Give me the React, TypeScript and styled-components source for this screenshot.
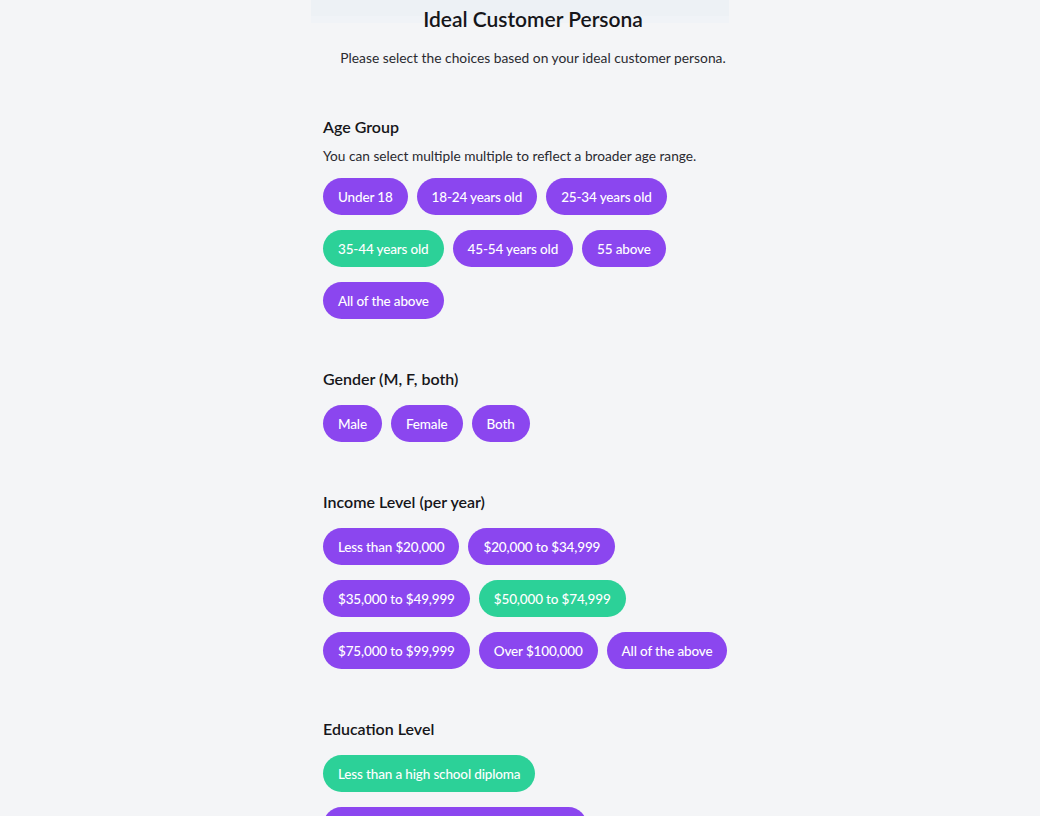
import React, { useState } from 'react';
import styled, { createGlobalStyle } from 'styled-components';

const GlobalStyle = createGlobalStyle`
    html, body {
        margin: 0;
        padding: 0;
        background: #f4f5f7;
        font-family: 'Lato', 'Liberation Sans', sans-serif;
        color: #1b1b1f;
    }
`;

interface Section {
    title: string;
    description?: string;
    options: string[];
    initial: string[];
}

const sections: Section[] = [
    {
        title: 'Age Group',
        description: 'You can select multiple multiple to reflect a broader age range.',
        options: [
            'Under 18',
            '18-24 years old',
            '25-34 years old',
            '35-44 years old',
            '45-54 years old',
            '55 above',
            'All of the above',
        ],
        initial: ['35-44 years old'],
    },
    {
        title: 'Gender (M, F, both)',
        options: ['Male', 'Female', 'Both'],
        initial: [],
    },
    {
        title: 'Income Level (per year)',
        options: [
            'Less than $20,000',
            '$20,000 to $34,999',
            '$35,000 to $49,999',
            '$50,000 to $74,999',
            '$75,000 to $99,999',
            'Over $100,000',
            'All of the above',
        ],
        initial: ['$50,000 to $74,999'],
    },
    {
        title: 'Education Level',
        options: [
            'Less than a high school diploma',
            'High school diploma or equivalent (GED)',
            'Some college, no degree',
            "Bachelor's degree",
        ],
        initial: ['Less than a high school diploma'],
    },
];

const Page = styled.div`
    width: 418px;
    margin: 0 auto;
    padding-bottom: 60px;
`;

const TopStrip = styled.div`
    height: 23px;
    margin-bottom: -23px;
    background: linear-gradient(#edf1f5 0 16px, #f0f3f7 16px 23px);
`;

const Content = styled.div`
    position: relative;
    width: 420px;
    margin-left: 12px;
    padding-top: 6px;
`;

const Header = styled.header`
    display: flex;
    flex-direction: column;
    align-items: center;
    gap: 17px;
`;

const Title = styled.h1`
    margin: 0;
    font-size: 21px;
    line-height: 25px;
    font-weight: 600;
    color: #16161a;
`;

const Subtitle = styled.p`
    margin: 0;
    font-size: 13.8px;
    line-height: 20px;
    color: #2a2a30;
`;

const Block = styled.section`
    margin-top: 47px;

    & + & {
        margin-top: 48px;
    }
`;

const Heading = styled.h2`
    margin: 0;
    font-size: 16px;
    line-height: 24px;
    font-weight: 600;
    color: #16161a;
`;

const Hint = styled.p`
    margin: 7px 0 0;
    font-size: 13.7px;
    line-height: 20px;
    color: #2a2a30;
`;

const Options = styled.div<{ $tight: boolean }>`
    display: flex;
    flex-wrap: wrap;
    column-gap: 9px;
    row-gap: 15px;
    margin-top: ${(p) => (p.$tight ? 12 : 14)}px;
`;

const Pill = styled.button<{ $active: boolean }>`
    height: 37px;
    padding: 0 15px;
    border: none;
    border-radius: 19px;
    background: ${(p) => (p.$active ? '#2cd198' : '#8b46ef')};
    color: #ffffff;
    font-family: inherit;
    font-size: 13.5px;
    font-weight: 500;
    letter-spacing: -0.15px;
    white-space: nowrap;
    cursor: pointer;
`;

const App = () => {
    const [selected, setSelected] = useState<Record<string, string[]>>(() =>
        Object.fromEntries(sections.map((s) => [s.title, s.initial]))
    );

    const toggle = (section: string, option: string) => {
        setSelected((prev) => {
            const list = prev[section] || [];
            const next = list.includes(option) ? list.filter((o) => o !== option) : [...list, option];
            return { ...prev, [section]: next };
        });
    };

    return (
        <>
            <GlobalStyle />
            <Page>
                <TopStrip />
                <Content>
                    <Header>
                        <Title>Ideal Customer Persona</Title>
                        <Subtitle>Please select the choices based on your ideal customer persona.</Subtitle>
                    </Header>
                    {sections.map((section) => (
                        <Block key={section.title}>
                            <Heading>{section.title}</Heading>
                            {section.description && <Hint>{section.description}</Hint>}
                            <Options $tight={!!section.description}>
                                {section.options.map((option) => (
                                    <Pill
                                        key={option}
                                        $active={selected[section.title].includes(option)}
                                        onClick={() => toggle(section.title, option)}
                                    >
                                        {option}
                                    </Pill>
                                ))}
                            </Options>
                        </Block>
                    ))}
                </Content>
            </Page>
        </>
    );
};

export default App;
